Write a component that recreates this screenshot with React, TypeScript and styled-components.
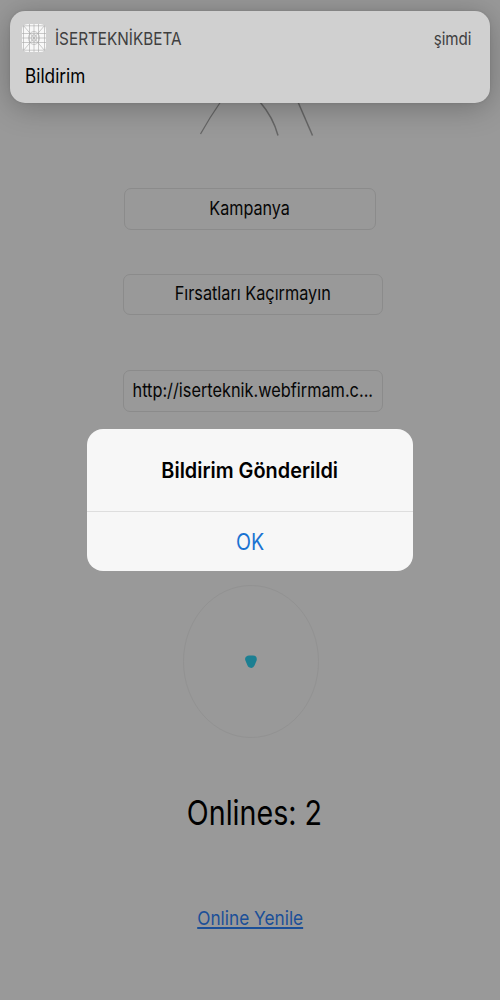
import React from "react";
import styled, { createGlobalStyle } from "styled-components";

const GlobalStyle = createGlobalStyle`
  * { box-sizing: border-box; }
  html, body { margin: 0; padding: 0; background: #999999; }
`;

const Screen = styled.div`
  position: relative;
  width: 500px;
  height: 1000px;
  overflow: hidden;
  background: #999999;
  font-family: Inter, "Liberation Sans", sans-serif;
  color: #060606;
`;

const Label = styled.span<{ $size: number; $stretch: number; $origin?: string }>`
  display: inline-block;
  white-space: nowrap;
  font-size: ${(p) => p.$size}px;
  line-height: 1.2;
  transform: scaleX(${(p) => p.$stretch});
  transform-origin: ${(p) => p.$origin ?? "center"} center;
`;

const Page = styled.main`
  display: flex;
  flex-direction: column;
  align-items: center;
  width: 100%;
`;

const Logo = styled.svg`
  display: block;
  width: 500px;
  height: 136px;
  fill: none;
  stroke: #666666;
`;

const Field = styled.div<{ $width: number; $height: number; $top: number; $shift: number }>`
  display: flex;
  align-items: center;
  justify-content: center;
  width: ${(p) => p.$width}px;
  height: ${(p) => p.$height}px;
  margin-top: ${(p) => p.$top}px;
  margin-left: ${(p) => p.$shift}px;
  border: 1px solid #8b8b8b;
  border-radius: 7px;
`;

const Gauge = styled.svg`
  display: block;
  width: 140px;
  height: 156px;
  margin-top: 171px;
  margin-left: 2px;
`;

const Count = styled.div`
  display: flex;
  justify-content: center;
  margin-top: 53px;
  margin-left: 9px;
  color: #000;
`;

const Refresh = styled.a`
  display: flex;
  justify-content: center;
  margin-top: 74px;
  color: #1b4f98;
  text-decoration: underline;
  text-decoration-thickness: 1.5px;
  text-underline-offset: 2px;
`;

const Banner = styled.section`
  position: absolute;
  top: 11px;
  left: 10px;
  width: 480px;
  height: 92px;
  padding: 13px 18px 0 12px;
  border-radius: 15px;
  background: #d0d0d0;
  box-shadow: 0 4px 30px rgba(0, 0, 0, 0.27), 0 0 3px rgba(0, 0, 0, 0.1);
`;

const BannerHeader = styled.header`
  display: flex;
  align-items: center;
  height: 28px;
  color: #3f3f3f;
`;

const AppIcon = styled.svg`
  width: 24px;
  height: 28px;
  margin-right: 9px;
  border-radius: 5.5px;
`;

const AppName = styled.div`
  padding-top: 2px;
`;

const Time = styled.div`
  margin-left: auto;
  padding: 2px 1px 0 0;
`;

const BannerBody = styled.div`
  margin: 13px 0 0 2.5px;
  color: #000;
`;

const Alert = styled.section`
  position: absolute;
  top: 429px;
  left: 87px;
  display: flex;
  flex-direction: column;
  width: 326px;
  height: 142px;
  border-radius: 16px;
  background: #f7f7f7;
  overflow: hidden;
`;

const AlertTitle = styled.div`
  display: flex;
  align-items: center;
  justify-content: center;
  height: 82px;
  padding-top: 1px;
  font-weight: 600;
  color: #000;
`;

const AlertAction = styled.button`
  display: flex;
  align-items: center;
  justify-content: center;
  flex: 1;
  border: 0;
  border-top: 1px solid #dedede;
  padding: 0;
  background: none;
  font-family: inherit;
  color: #1a73d2;
`;

const fields = [
  { text: "Kampanya", width: 252, height: 42, top: 52, shift: 0, stretch: 0.865 },
  { text: "Fırsatları Kaçırmayın", width: 260, height: 41, top: 44, shift: 6, stretch: 0.87 },
  { text: "http://iserteknik.webfirmam.c...", width: 260, height: 42, top: 55, shift: 6, stretch: 0.873 },
];

export default function App() {
  return (
    <Screen>
      <GlobalStyle />
      <Page>
        <Logo viewBox="0 0 500 136">
          <path d="M220.5 102 Q210 117 200.5 134" strokeWidth="1.3" />
          <path d="M260 102 Q273 117 278 135.500" strokeWidth="1.5" />
          <path d="M298 102 L312.500 135.500" strokeWidth="1.5" />
        </Logo>
        {fields.map((f) => (
          <Field key={f.text} $width={f.width} $height={f.height} $top={f.top} $shift={f.shift}>
            <Label $size={18.7} $stretch={f.stretch}>{f.text}</Label>
          </Field>
        ))}
        <Gauge viewBox="0 0 140 156">
          <ellipse cx="70" cy="78.500" rx="67.500" ry="76" fill="none" stroke="#929292" strokeWidth="1" />
          <path
            d="M68 76.200 L72 76.200 L70 81 Z"
            fill="#1c7f92"
            stroke="#1c7f92"
            strokeWidth="7.600"
            strokeLinejoin="round"
          />
        </Gauge>
        <Count>
          <Label $size={34.5} $stretch={0.83}>Onlines: 2</Label>
        </Count>
        <Refresh>
          <Label $size={19.3} $stretch={0.895}>Online Yenile</Label>
        </Refresh>
      </Page>
      <Banner>
        <BannerHeader>
          <AppIcon viewBox="0 0 24 28">
            <rect width="24" height="28" fill="#f8f8f8" />
            <g fill="none" stroke="#a8a8a8" strokeWidth="0.6">
              <path d="M1.500 0V28M7.500 0V28M12 0V28M16.500 0V28M22.500 0V28M0 1.800H24M0 9.500H24M0 14H24M0 18.500H24M0 26.200H24M1 1L23 27M23 1L1 27" />
              <ellipse cx="12" cy="14" rx="2.800" ry="3.300" />
              <ellipse cx="12" cy="14" rx="5.500" ry="6.500" />
            </g>
          </AppIcon>
          <AppName>
            <Label $size={17.4} $stretch={0.88} $origin="left">İSERTEKNİKBETA</Label>
          </AppName>
          <Time>
            <Label $size={17.4} $stretch={0.87} $origin="right">şimdi</Label>
          </Time>
        </BannerHeader>
        <BannerBody>
          <Label $size={19.8} $stretch={0.87} $origin="left">Bildirim</Label>
        </BannerBody>
      </Banner>
      <Alert>
        <AlertTitle>
          <Label $size={21.3} $stretch={0.933}>Bildirim Gönderildi</Label>
        </AlertTitle>
        <AlertAction>
          <Label $size={22.5} $stretch={0.87}>OK</Label>
        </AlertAction>
      </Alert>
    </Screen>
  );
}
